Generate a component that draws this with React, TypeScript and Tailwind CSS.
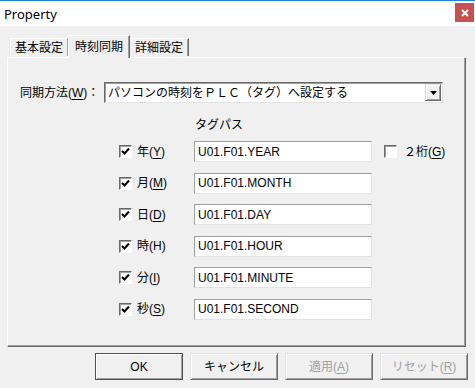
import React from "react";

const font = {
  fontFamily: '"Liberation Sans", "Noto Sans CJK JP", sans-serif',
};

const Check: React.FC<{ checked?: boolean }> = ({ checked }) => (
  <div className="w-[13px] h-[13px] bg-white border border-t-[#696969] border-l-[#696969] border-r-white border-b-white shadow-[inset_1px_1px_#a0a0a0] flex items-center justify-center shrink-0">
    {checked && (
      <svg width="9" height="9" viewBox="0 0 9 9">
        <path d="M1 4 L3.5 6.5 L8 1.5" stroke="#000" strokeWidth="2" fill="none" />
      </svg>
    )}
  </div>
);

const Mn: React.FC<{ k: string }> = ({ k }) => <span className="underline underline-offset-2">{k}</span>;

const rows = [
  { jp: "年", key: "Y", ul: true, path: "U01.F01.YEAR" },
  { jp: "月", key: "M", ul: true, path: "U01.F01.MONTH" },
  { jp: "日", key: "D", ul: true, path: "U01.F01.DAY" },
  { jp: "時", key: "H", ul: false, path: "U01.F01.HOUR" },
  { jp: "分", key: "I", ul: true, path: "U01.F01.MINUTE" },
  { jp: "秒", key: "S", ul: true, path: "U01.F01.SECOND" },
];

const Button: React.FC<{ children: React.ReactNode; primary?: boolean; disabled?: boolean }> = ({
  children,
  primary,
  disabled,
}) => (
  <div
    className={
      "w-[88px] h-[27px] flex items-center justify-center text-[12px] bg-[#f0f0f0] " +
      (primary
        ? "border border-[#505050] shadow-[inset_1px_1px_white,inset_-1px_-1px_#a0a0a0]"
        : "border border-t-[#e3e3e3] border-l-[#e3e3e3] border-r-[#696969] border-b-[#696969] shadow-[inset_1px_1px_white,inset_-1px_-1px_#a0a0a0]") +
      (disabled ? " text-[#a0a0a0]" : " text-black")
    }
  >
    {children}
  </div>
);

export default function App() {
  return (
    <div className="w-[475px] h-[388px] bg-[#f0f0f0] flex flex-col text-black overflow-hidden" style={font}>
      <div className="h-[26px] bg-white border-t border-[#1883d7] flex items-start justify-between shrink-0">
        <div className="pl-[4px] pt-[4px] text-[13px]" style={{ fontFamily: '"Noto Sans", sans-serif' }}>
          Property
        </div>
        <div className="mt-[2px] mr-[1px] w-[19px] h-[19px] bg-[#c75050] flex items-center justify-center">
          <svg width="8" height="8" viewBox="0 0 8 8">
            <path d="M1 1 L7 7 M7 1 L1 7" stroke="#fff" strokeWidth="2" />
          </svg>
        </div>
      </div>

      <div className="px-[7px] pt-[8px] flex flex-col">
        <div className="flex items-end h-[23px] pl-[3px] relative z-10">
          <div className="h-[18px] w-[58px] flex items-center justify-center text-[12px] border border-b-0 border-t-white border-l-white border-r-[#a0a0a0] mb-[1px]">
            基本設定
          </div>
          <div className="h-[23px] w-[62px] -mb-[1px] flex items-start pt-[2px] justify-center text-[12px] bg-[#f0f0f0] border border-b-0 border-t-white border-l-white border-r-[#696969] shadow-[inset_-1px_0_#a0a0a0]">
            時刻同期
          </div>
          <div className="h-[18px] w-[59px] flex items-center justify-center text-[12px] border border-b-0 border-t-white border-l-0 border-r-[#696969] shadow-[inset_-1px_0_#a0a0a0] mb-[1px]">
            詳細設定
          </div>
        </div>

        <div className="h-[290px] w-[459px] border border-t-white border-l-white border-r-[#696969] border-b-[#696969] shadow-[inset_-1px_-1px_#a0a0a0] pt-[24px] flex flex-col">
          <div className="flex items-center h-[21px]">
            <div className="pl-[12px] w-[96px] text-[12px]">
              同期方法(<Mn k="W" />)：
            </div>
            <div className="w-[339px] h-[21px] bg-white border border-t-[#696969] border-l-[#696969] border-r-[#e3e3e3] border-b-[#e3e3e3] shadow-[inset_1px_1px_#a0a0a0] flex items-center">
              <div className="flex-1 pl-[3px] text-[12px]">パソコンの時刻をＰＬＣ（タグ）へ設定する</div>
              <div className="w-[16px] h-[17px] mr-[1px] bg-[#f0f0f0] border border-t-[#e3e3e3] border-l-[#e3e3e3] border-r-[#696969] border-b-[#696969] shadow-[inset_1px_1px_white,inset_-1px_-1px_#a0a0a0] flex items-center justify-center">
                <svg width="7" height="4" viewBox="0 0 7 4">
                  <path d="M0 0 H7 L3.5 4 Z" fill="#000" />
                </svg>
              </div>
            </div>
          </div>

          <div className="mt-[15px] pl-[187px] text-[12px] h-[15px] leading-[15px]">タグパス</div>

          <div className="mt-[8px] flex flex-col gap-[10.6px]">
            {rows.map((r, i) => (
              <div key={r.key} className="flex items-center h-[21px] pl-[111px]">
                <Check checked />
                <div className="ml-[5px] w-[57px] text-[12px]">
                  {r.jp}({r.ul ? <Mn k={r.key} /> : r.key})
                </div>
                <div className="w-[178px] h-[21px] bg-white border border-t-[#a0a0a0] border-l-[#a0a0a0] border-r-[#e3e3e3] border-b-[#e3e3e3] flex items-center pl-[3px] text-[12px]">
                  {r.path}
                </div>
                {i === 0 && (
                  <div className="flex items-center ml-[12px]">
                    <Check />
                    <div className="ml-[7px] text-[12px]">
                      ２桁(<Mn k="G" />)
                    </div>
                  </div>
                )}
              </div>
            ))}
          </div>
        </div>
      </div>

      <div className="mt-[6px] flex justify-end gap-[7px] pr-[7px]">
        <Button primary>OK</Button>
        <Button>キャンセル</Button>
        <Button disabled>
          適用(<Mn k="A" />)
        </Button>
        <Button disabled>
          リセット(<Mn k="R" />)
        </Button>
      </div>
    </div>
  );
}
